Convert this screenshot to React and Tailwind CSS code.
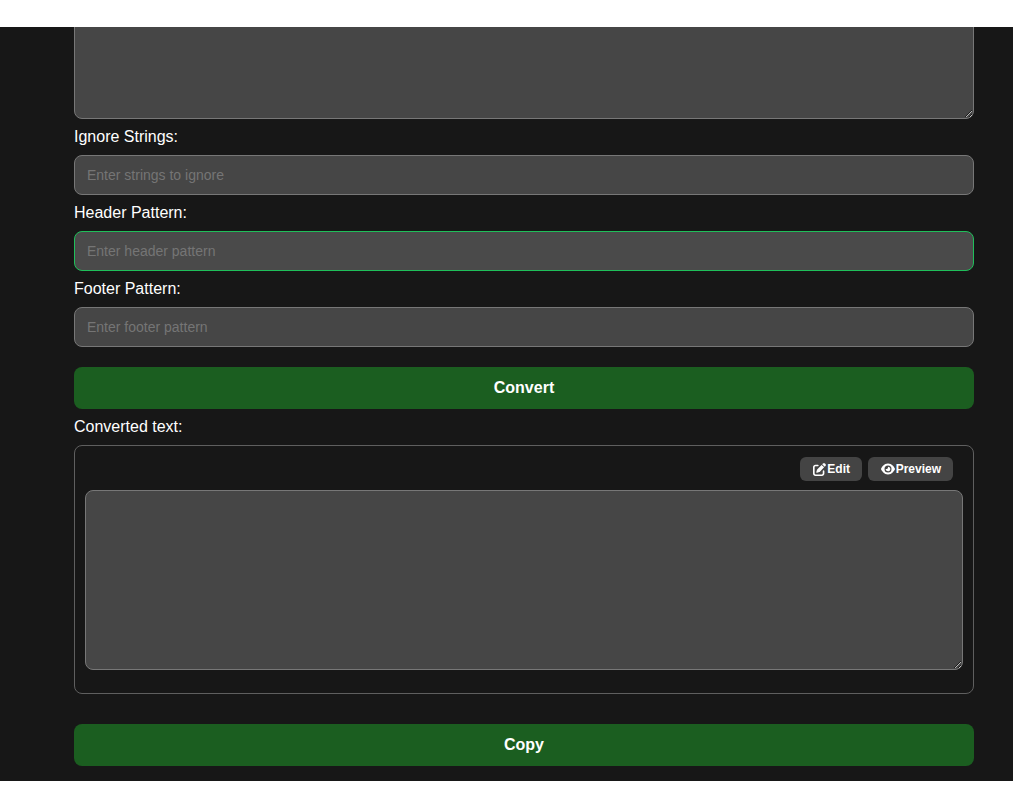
import React from "react";
import { FaEye, FaPenToSquare } from "react-icons/fa6";

function Field({ label, placeholder, focused }) {
  return (
    <div className="mt-[9px]">
      <label className="block text-base leading-[18px] text-white mb-[9px]">{label}</label>
      <input
        type="text"
        placeholder={placeholder}
        className={`block w-full h-10 rounded-lg border px-3 text-sm text-white outline-none placeholder:text-[#757575] ${focused ? "border-[#1fbf5a] bg-[#4a4a4a]" : "border-[#777777] bg-[#464646]"}`}
      />
    </div>
  );
}

export default function App() {
  return (
    <div className="h-[808px] bg-white font-['Liberation_Sans',Arial,sans-serif]">
      <div className="h-[27px]" />
      <main className="h-[754px] overflow-hidden bg-[#171717] pl-[74px] pr-[39px]">
        <textarea
          readOnly
          className="block w-full h-[180px] -mt-[88px] rounded-lg border border-[#777777] bg-[#464646]"
        />
        <Field label="Ignore Strings:" placeholder="Enter strings to ignore" />
        <Field label="Header Pattern:" placeholder="Enter header pattern" focused />
        <Field label="Footer Pattern:" placeholder="Enter footer pattern" />
        <button className="mt-5 block w-full h-[42px] rounded-lg bg-[#1b5e20] text-base font-bold text-white">
          Convert
        </button>
        <div className="mt-[9px] mb-[9px] text-base leading-[18px] text-white">Converted text:</div>
        <div className="h-[249px] rounded-lg border border-[#5f5f5f] px-[10px] pt-[11px]">
          <div className="flex justify-end gap-[6px] pr-[10px] mb-[9px]">
            <button className="flex h-6 w-[62px] items-center justify-end gap-px rounded-md bg-[#444444] pr-3 text-xs font-bold text-white">
              <FaPenToSquare className="h-[13px] w-[13px]" />
              Edit
            </button>
            <button className="flex h-6 w-[85px] items-center justify-end gap-px rounded-md bg-[#444444] pr-3 text-xs font-bold text-white">
              <FaEye className="h-[14px] w-[14px]" />
              Preview
            </button>
          </div>
          <textarea
            readOnly
            className="block w-full h-[180px] rounded-lg border border-[#777777] bg-[#464646]"
          />
        </div>
        <button className="mt-[30px] block w-full h-[42px] rounded-lg bg-[#1b5e20] text-base font-bold text-white">
          Copy
        </button>
      </main>
    </div>
  );
}
